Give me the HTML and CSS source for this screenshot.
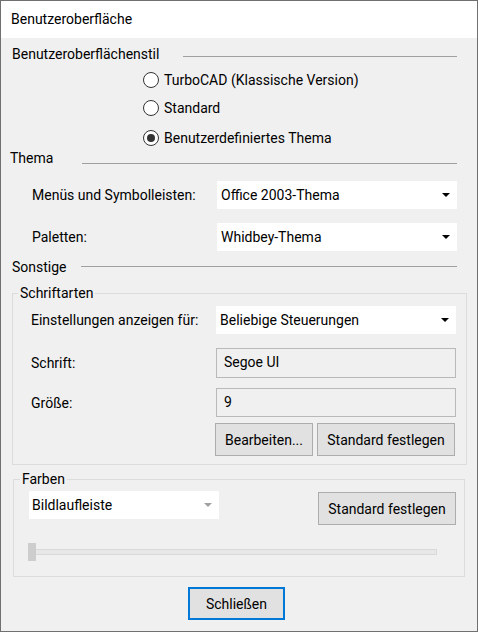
FILE: index.html
```html
<!DOCTYPE html>
<html lang="de">
<head>
  <meta charset="UTF-8" />
  <title>Benutzeroberfläche</title>
  <link rel="stylesheet" href="styles.css">
</head>
<body>
  <div class="window">
    <div class="titlebar">Benutzeroberfläche</div>

    <div class="content">
      <div class="section-head head-style">
        <span class="head-label">Benutzeroberflächenstil</span>
        <span class="head-line"></span>
      </div>

      <div class="radio-list">
        <div class="radio-row"><span class="radio"></span>TurboCAD (Klassische Version)</div>
        <div class="radio-row second"><span class="radio"></span>Standard</div>
        <div class="radio-row third"><span class="radio checked"></span>Benutzerdefiniertes Thema</div>
      </div>

      <div class="section-head head-theme">
        <span class="head-label">Thema</span>
        <span class="head-line"></span>
      </div>

      <div class="form-row first-row">
        <span class="label">Menüs und Symbolleisten:</span>
        <div class="combo">Office 2003-Thema<span class="arrow"></span></div>
      </div>
      <div class="form-row second-row">
        <span class="label">Paletten:</span>
        <div class="combo">Whidbey-Thema<span class="arrow"></span></div>
      </div>

      <div class="section-head head-other">
        <span class="head-label">Sonstige</span>
        <span class="head-line"></span>
      </div>

      <fieldset class="group fonts">
        <legend>Schriftarten</legend>
        <div class="group-body">
          <div class="form-row">
            <span class="label">Einstellungen anzeigen für:</span>
            <div class="combo">Beliebige Steuerungen<span class="arrow"></span></div>
          </div>
          <div class="form-row text-row">
            <span class="label">Schrift:</span>
            <div class="textbox">Segoe UI</div>
          </div>
          <div class="form-row text-row size-row">
            <span class="label">Größe:</span>
            <div class="textbox">9</div>
          </div>
          <div class="button-row">
            <button class="btn edit-btn">Bearbeiten...</button>
            <button class="btn reset-btn">Standard festlegen</button>
          </div>
        </div>
      </fieldset>

      <fieldset class="group colors">
        <legend>Farben</legend>
        <div class="group-body">
          <div class="color-row">
            <div class="combo small disabled">Bildlaufleiste<span class="arrow"></span></div>
            <button class="btn reset-btn">Standard festlegen</button>
          </div>
          <div class="slider">
            <span class="thumb"></span>
            <span class="track"></span>
          </div>
        </div>
      </fieldset>

      <div class="footer">
        <button class="btn close-btn">Schließen</button>
      </div>
    </div>
  </div>
</body>
</html>
```
FILE: styles.css
```css
body {
  margin: 0;
  font-family: Roboto, "Noto Sans", sans-serif;
  font-size: 14px;
  color: #000;
  background-color: #f0f0f0;
}

.window {
  width: 478px;
  height: 632px;
  box-sizing: border-box;
  border: 1px solid #707070;
  background-color: #f0f0f0;
}

.titlebar {
  height: 37px;
  line-height: 37px;
  padding-left: 10px;
  background-color: #fff;
}

.content {
  display: flex;
  flex-direction: column;
}

/* Abschnittsüberschrift mit Trennlinie */
.section-head {
  display: flex;
  align-items: center;
  height: 20px;
  line-height: 20px;
  padding-right: 20px;
}

.head-label {
  flex-shrink: 0;
  padding-left: 11px;
}

.head-line {
  flex: 1;
  border-top: 1px solid #a0a0a0;
}

.head-style {
  margin-top: 6px;
}

.head-style .head-label {
  width: 171px;
}

.head-style .head-line {
  margin-top: 4px;
}

.head-theme .head-label {
  width: 72px;
  padding-left: 9px;
}

.head-theme .head-line {
  margin-top: 10px;
}

.head-other {
  margin-top: 6px;
}

.head-other .head-label {
  width: 69px;
}

.head-other .head-line {
  margin-top: -2px;
}

/* Optionsfelder */
.radio-list {
  margin-top: 6px;
  padding-left: 142px;
}

.radio-row {
  display: flex;
  align-items: center;
  height: 20px;
}

.radio-row.second {
  margin-top: 8px;
}

.radio-row.third {
  margin-top: 10px;
}

.radio {
  position: relative;
  width: 14px;
  height: 14px;
  margin-right: 5px;
  border: 1px solid #333;
  border-radius: 50%;
  background-color: #fff;
}

.radio.checked::after {
  content: "";
  position: absolute;
  left: 3px;
  top: 3px;
  width: 8px;
  height: 8px;
  border-radius: 50%;
  background-color: #333;
}

/* Zeilen mit Beschriftung und Eingabefeld */
.form-row {
  display: grid;
  grid-template-columns: 185px 240px;
  align-items: center;
  padding-left: 31px;
}

.first-row {
  margin-top: 13px;
}

.second-row {
  margin-top: 14px;
}

.combo {
  position: relative;
  height: 28px;
  line-height: 28px;
  padding-left: 4px;
  background-color: #fff;
}

.arrow {
  position: absolute;
  right: 7px;
  top: 12px;
  width: 0;
  height: 0;
  border-left: 4px solid transparent;
  border-right: 4px solid transparent;
  border-top: 4px solid #000;
}

.combo.disabled .arrow {
  border-top-color: #a0a0a0;
}

.combo.small {
  width: 187px;
  padding-left: 3px;
}

.textbox {
  height: 28px;
  line-height: 26px;
  padding-left: 7px;
  border: 1px solid #b9b9b9;
  background-color: #f0f0f0;
}

/* Gruppenrahmen */
.group {
  margin: 6px 10px 0 11px;
  padding: 0;
  border: 1px solid #dcdcdc;
  min-width: 0;
}

.group legend {
  margin-left: 5px;
  padding: 0 2px;
  line-height: 20px;
}

.fonts .group-body {
  padding: 3px 0 8px 18px;
}

.fonts .form-row {
  padding-left: 0;
}

.text-row {
  margin-top: 14px;
}

.text-row.size-row {
  margin-top: 10px;
}

.size-row .textbox {
  height: 27px;
}

.button-row {
  display: flex;
  gap: 4px;
  margin-top: 6px;
  padding-left: 184px;
}

.btn {
  height: 33px;
  padding: 0;
  font-family: inherit;
  font-size: 14px;
  color: #000;
  background-color: #e1e1e1;
  border: 1px solid #adadad;
}

.edit-btn {
  width: 98px;
}

.reset-btn {
  width: 138px;
}

.colors {
  margin: 4px 12px 0 12px;
}

.colors legend {
  margin-left: 6px;
}

.colors .group-body {
  padding: 2px 8px 15px 15px;
}

.color-row {
  display: flex;
  justify-content: space-between;
  align-items: flex-start;
}

.color-row .btn {
  margin-top: 1px;
}

/* Schieberegler */
.slider {
  display: flex;
  align-items: center;
  height: 18px;
  margin-top: 18px;
  margin-left: -1px;
}

.thumb {
  width: 8px;
  height: 18px;
  background-color: #cdcdcd;
}

.track {
  width: 400px;
  height: 4px;
  border: 1px solid #d9d9d9;
  border-left: none;
  background-color: #e7e7e7;
}

.footer {
  margin-top: 10px;
  padding-left: 187px;
}

.close-btn {
  width: 97px;
  height: 33px;
  border: 2px solid #0078d7;
}
```
